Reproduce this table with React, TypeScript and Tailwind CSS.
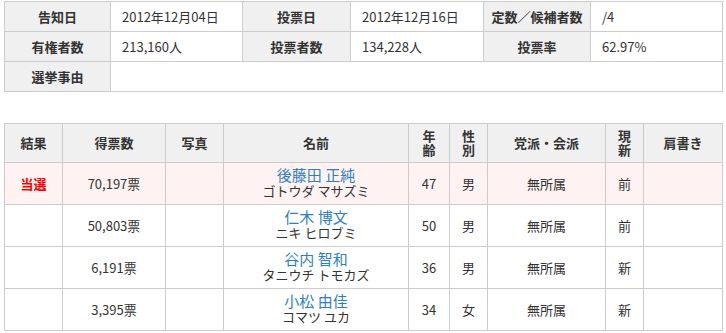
const font = {
  fontFamily: '"Noto Sans CJK JP", "Noto Sans", sans-serif',
};

const candidates = [
  { win: true, votes: "70,197票", name: "後藤田 正純", kana: "ゴトウダ マサズミ", age: 47, sex: "男", party: "無所属", status: "前" },
  { win: false, votes: "50,803票", name: "仁木 博文", kana: "ニキ ヒロブミ", age: 50, sex: "男", party: "無所属", status: "前" },
  { win: false, votes: "6,191票", name: "谷内 智和", kana: "タニウチ トモカズ", age: 36, sex: "男", party: "無所属", status: "新" },
  { win: false, votes: "3,395票", name: "小松 由佳", kana: "コマツ ユカ", age: 34, sex: "女", party: "無所属", status: "新" },
];

const th = "border border-[#cccccc] bg-[#f0f0f0] font-bold text-center text-[#333333] p-0";
const td = "border border-[#cccccc] text-[#333333] p-0";

function Summary() {
  return (
    <table className="w-[718px] table-fixed border-collapse text-[13px]">
      <colgroup>
        <col className="w-[106px]" />
        <col className="w-[132px]" />
        <col className="w-[108px]" />
        <col className="w-[133px]" />
        <col className="w-[107px]" />
        <col className="w-[132px]" />
      </colgroup>
      <tbody>
        <tr className="h-[30px]">
          <th className={th}>告知日</th>
          <td className={`${td} pl-[11px]`}>2012年12月04日</td>
          <th className={th}>投票日</th>
          <td className={`${td} pl-[11px]`}>2012年12月16日</td>
          <th className={th}>定数／候補者数</th>
          <td className={`${td} pl-[11px]`}>/4</td>
        </tr>
        <tr className="h-[30px]">
          <th className={th}>有権者数</th>
          <td className={`${td} pl-[11px]`}>213,160人</td>
          <th className={th}>投票者数</th>
          <td className={`${td} pl-[11px]`}>134,228人</td>
          <th className={th}>投票率</th>
          <td className={`${td} pl-[11px]`}>62.97%</td>
        </tr>
        <tr className="h-[30px]">
          <th className={th}>選挙事由</th>
          <td className={td} colSpan={5}></td>
        </tr>
      </tbody>
    </table>
  );
}

// two-character headings stacked vertically (年齢, 性別, 現新)
function Stacked({ a, b }: { a: string; b: string }) {
  return (
    <div className="flex flex-col items-center">
      <span className="leading-[14px]">{a}</span>
      <span className="leading-[14px]">{b}</span>
    </div>
  );
}

function Results() {
  return (
    <table className="w-[718px] table-fixed border-collapse text-[13px]">
      <colgroup>
        <col className="w-[58px]" />
        <col className="w-[103px]" />
        <col className="w-[58px]" />
        <col className="w-[185px]" />
        <col className="w-[41px]" />
        <col className="w-[38px]" />
        <col className="w-[118px]" />
        <col className="w-[38px]" />
        <col className="w-[79px]" />
      </colgroup>
      <thead>
        <tr className="h-[39px]">
          <th className={th}>結果</th>
          <th className={th}>得票数</th>
          <th className={th}>写真</th>
          <th className={th}>名前</th>
          <th className={th}><Stacked a="年" b="齢" /></th>
          <th className={th}><Stacked a="性" b="別" /></th>
          <th className={th}>党派・会派</th>
          <th className={th}><Stacked a="現" b="新" /></th>
          <th className={th}>肩書き</th>
        </tr>
      </thead>
      <tbody>
        {candidates.map((c) => (
          <tr key={c.name} className={`h-[42px] ${c.win ? "bg-[#fff2f2]" : "bg-white"}`}>
            <td className={`${td} text-center font-bold text-[#ff0000]`}>{c.win ? "当選" : ""}</td>
            <td className={`${td} text-center`}>{c.votes}</td>
            <td className={td}></td>
            <td className={`${td} text-center pb-[3px]`}>
              <div className="text-[15px] leading-[17px] text-[#2f7fbf]">{c.name}</div>
              <div className="text-[13px] leading-[15px]">{c.kana}</div>
            </td>
            <td className={`${td} text-center`}>{c.age}</td>
            <td className={`${td} text-center`}>{c.sex}</td>
            <td className={`${td} text-center`}>{c.party}</td>
            <td className={`${td} text-center`}>{c.status}</td>
            <td className={td}></td>
          </tr>
        ))}
      </tbody>
    </table>
  );
}

export default function App() {
  return (
    <div className="w-[726px] h-[333px] bg-white px-[4px] pt-[1px]" style={font}>
      <Summary />
      <div className="h-[31px]" />
      <Results />
    </div>
  );
}
